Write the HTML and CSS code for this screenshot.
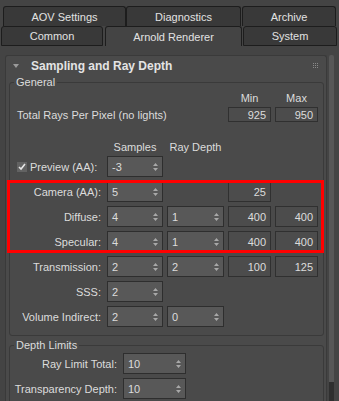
FILE: index.html
```html
<!DOCTYPE html>
<html lang="en">
<head>
    <meta charset="UTF-8">
    <meta name="viewport" content="width=device-width, initial-scale=1.0">
    <title>Render Setup - Arnold Renderer</title>
    <link rel="stylesheet" href="styles.css">
</head>
<body>
<div class="tabs">
    <div class="tab-row top">
        <div class="tab tab-aov">AOV Settings</div>
        <div class="tab tab-diag">Diagnostics</div>
        <div class="tab tab-archive">Archive</div>
    </div>
    <div class="tab-row bottom">
        <div class="tab tab-common">Common</div>
        <div class="tab tab-arnold active">Arnold Renderer</div>
        <div class="tab tab-system">System</div>
    </div>
</div>

<div class="main">
    <div class="rollout">
        <div class="rollout-head">
            <span class="caret"></span>
            <span class="rollout-title">Sampling and Ray Depth</span>
            <svg class="grip" width="5" height="5" viewBox="0 0 5 5">
                <g fill="#8a8a8a">
                    <rect x="0" y="0" width="1" height="1"/><rect x="2" y="0" width="1" height="1"/><rect x="4" y="0" width="1" height="1"/>
                    <rect x="0" y="2" width="1" height="1"/><rect x="2" y="2" width="1" height="1"/><rect x="4" y="2" width="1" height="1"/>
                    <rect x="0" y="4" width="1" height="1"/><rect x="2" y="4" width="1" height="1"/><rect x="4" y="4" width="1" height="1"/>
                </g>
            </svg>
        </div>

        <fieldset class="group general">
            <legend>General</legend>

            <div class="row head first">
                <span class="c4">Min</span>
                <span class="c5">Max</span>
            </div>
            <div class="row short">
                <span class="label-left wide">Total Rays Per Pixel (no lights)</span>
                <span class="field c4">925</span>
                <span class="field c5">950</span>
            </div>

            <div class="row head second">
                <span class="c2">Samples</span>
                <span class="c3">Ray Depth</span>
            </div>
            <div class="row">
                <label class="label-left check-label">
                    <span class="checkbox">
                        <svg width="10" height="10" viewBox="0 0 10 10"><path d="M2 5l2 2 4-5" fill="none" stroke="#e6e6e6" stroke-width="1.6"/></svg>
                    </span>
                    Preview (AA):
                </label>
                <div class="spinner c2"><span>-3</span><svg width="5" height="8" viewBox="0 0 5 8"><path d="M2.5 0L5 3H0zM0 5h5L2.5 8z" fill="#a8a8a8"/></svg></div>
            </div>

            <div class="highlight">
                <div class="row">
                    <span class="label">Camera (AA):</span>
                    <div class="spinner c2"><span>5</span><svg width="5" height="8" viewBox="0 0 5 8"><path d="M2.5 0L5 3H0zM0 5h5L2.5 8z" fill="#a8a8a8"/></svg></div>
                    <span class="field c4">25</span>
                </div>
                <div class="row">
                    <span class="label">Diffuse:</span>
                    <div class="spinner c2"><span>4</span><svg width="5" height="8" viewBox="0 0 5 8"><path d="M2.5 0L5 3H0zM0 5h5L2.5 8z" fill="#a8a8a8"/></svg></div>
                    <div class="spinner c3"><span>1</span><svg width="5" height="8" viewBox="0 0 5 8"><path d="M2.5 0L5 3H0zM0 5h5L2.5 8z" fill="#a8a8a8"/></svg></div>
                    <span class="field c4">400</span>
                    <span class="field c5">400</span>
                </div>
                <div class="row">
                    <span class="label">Specular:</span>
                    <div class="spinner c2"><span>4</span><svg width="5" height="8" viewBox="0 0 5 8"><path d="M2.5 0L5 3H0zM0 5h5L2.5 8z" fill="#a8a8a8"/></svg></div>
                    <div class="spinner c3"><span>1</span><svg width="5" height="8" viewBox="0 0 5 8"><path d="M2.5 0L5 3H0zM0 5h5L2.5 8z" fill="#a8a8a8"/></svg></div>
                    <span class="field c4">400</span>
                    <span class="field c5">400</span>
                </div>
            </div>

            <div class="row">
                <span class="label">Transmission:</span>
                <div class="spinner c2"><span>2</span><svg width="5" height="8" viewBox="0 0 5 8"><path d="M2.5 0L5 3H0zM0 5h5L2.5 8z" fill="#a8a8a8"/></svg></div>
                <div class="spinner c3"><span>2</span><svg width="5" height="8" viewBox="0 0 5 8"><path d="M2.5 0L5 3H0zM0 5h5L2.5 8z" fill="#a8a8a8"/></svg></div>
                <span class="field c4">100</span>
                <span class="field c5">125</span>
            </div>
            <div class="row">
                <span class="label">SSS:</span>
                <div class="spinner c2"><span>2</span><svg width="5" height="8" viewBox="0 0 5 8"><path d="M2.5 0L5 3H0zM0 5h5L2.5 8z" fill="#a8a8a8"/></svg></div>
            </div>
            <div class="row">
                <span class="label">Volume Indirect:</span>
                <div class="spinner c2"><span>2</span><svg width="5" height="8" viewBox="0 0 5 8"><path d="M2.5 0L5 3H0zM0 5h5L2.5 8z" fill="#a8a8a8"/></svg></div>
                <div class="spinner c3"><span>0</span><svg width="5" height="8" viewBox="0 0 5 8"><path d="M2.5 0L5 3H0zM0 5h5L2.5 8z" fill="#a8a8a8"/></svg></div>
            </div>
        </fieldset>

        <fieldset class="group depth">
            <legend>Depth Limits</legend>
            <div class="row depth-row first">
                <span class="label">Ray Limit Total:</span>
                <div class="spinner"><span>10</span><svg width="5" height="8" viewBox="0 0 5 8"><path d="M2.5 0L5 3H0zM0 5h5L2.5 8z" fill="#a8a8a8"/></svg></div>
            </div>
            <div class="row depth-row">
                <span class="label">Transparency Depth:</span>
                <div class="spinner"><span>10</span><svg width="5" height="8" viewBox="0 0 5 8"><path d="M2.5 0L5 3H0zM0 5h5L2.5 8z" fill="#a8a8a8"/></svg></div>
            </div>
        </fieldset>
    </div>

    <div class="scrollbar">
        <div class="thumb"></div>
        <div class="track"></div>
    </div>
</div>
</body>
</html>
```

FILE: styles.css
```css
* {
    box-sizing: border-box;
}

body {
    margin: 0;
    height: 401px;
    overflow: hidden;
    background-color: #444444;
    color: #dcdcdc;
    font-family: 'Liberation Sans', Arial, sans-serif;
    font-size: 11px;
}

/* tabs */
.tabs {
    padding-top: 6px;
}

.tab-row {
    display: flex;
    height: 20px;
}

.tab-row.top {
    padding-left: 3px;
}

.tab-row.bottom {
    padding-left: 1px;
}

.tab {
    display: flex;
    align-items: center;
    justify-content: center;
    height: 20px;
    background-color: #393939;
    border: 1px solid #1d1d1d;
    border-bottom: none;
    border-radius: 3px 3px 0 0;
    color: #e2e2e2;
}

.tab-row.bottom .tab {
    border-bottom: 1px solid #1d1d1d;
}

.tab-row.bottom .tab.active {
    background-color: #444444;
    border-bottom: none;
}

.tab-aov { width: 123px; }
.tab-diag { width: 115px; }
.tab-archive { width: 94px; margin-left: 1px; }
.tab-common { width: 102px; }
.tab-arnold { width: 137px; margin-left: 2px; }
.tab-system { width: 94px; margin-left: 1px; }

/* rollout */
.main {
    display: flex;
    margin-top: 9px;
}

.rollout {
    width: 322px;
    margin-left: 5px;
    background-color: #4a4a4a;
    border: 1px solid #3a3a3a;
    border-bottom: none;
    border-radius: 3px 3px 0 0;
    height: 346px;
    overflow: hidden;
}

.rollout-head {
    display: flex;
    align-items: center;
    height: 19px;
    padding-left: 7px;
    padding-right: 8px;
}

.caret {
    width: 0;
    height: 0;
    border-left: 3px solid transparent;
    border-right: 3px solid transparent;
    border-top: 4px solid #9a9a9a;
    margin-right: 12px;
}

.rollout-title {
    flex: 1;
    font-size: 12px;
    font-weight: bold;
    color: #e4e4e4;
}

.grip {
    display: block;
}

/* group boxes */
.group {
    margin: 1px 2px 0 3px;
    padding: 0 0 8px 0;
    border: 1px solid #3a3a3a;
    border-radius: 3px;
    min-width: 0;
}

.group legend {
    margin-left: 4px;
    padding: 0 2px;
    line-height: 13px;
    color: #dcdcdc;
}

.group.depth {
    margin-top: 3px;
    padding-bottom: 20px;
}

.row {
    display: grid;
    grid-template-columns: 93px 56px 57px 43px 43px;
    column-gap: 4px;
    align-items: center;
    height: 21px;
    margin-top: 4px;
}

.row.head {
    height: 14px;
    text-align: center;
}

.row.head.first {
    margin-top: 2px;
}

.row.head.second {
    margin-top: 18px;
}

.row.short {
    height: 15px;
    margin-top: 2px;
}

.row.head.second + .row {
    margin-top: 2px;
}

.c2 { grid-column: 2; }
.c3 { grid-column: 3; }
.c4 { grid-column: 4; }
.c5 { grid-column: 5; }

.wide {
    grid-column: 1 / 4;
}

.label {
    grid-column: 1;
    text-align: right;
    padding-right: 2px;
    white-space: nowrap;
}

.label-left {
    padding-left: 7px;
    white-space: nowrap;
}

.check-label {
    grid-column: 1;
    display: flex;
    align-items: center;
    gap: 3px;
    padding-left: 7px;
}

.checkbox {
    display: block;
    width: 10px;
    height: 10px;
    background-color: #626262;
}

.checkbox svg {
    display: block;
}

.field {
    height: 100%;
    display: flex;
    align-items: center;
    justify-content: flex-end;
    padding-right: 4px;
    border: 1px solid #303030;
    background-color: #4c4c4c;
}

.spinner {
    height: 100%;
    display: flex;
    align-items: center;
    justify-content: space-between;
    padding: 0 4px 0 4px;
    background-color: #585858;
    border: 1px solid #2e2e2e;
}

.spinner svg {
    display: block;
}

.highlight {
    position: relative;
}

/* annotation frame drawn over the rows */
.highlight::after {
    content: '';
    position: absolute;
    top: -1px;
    left: -3px;
    right: -1px;
    bottom: -1px;
    border: 3px solid #ff0000;
    pointer-events: none;
}

.depth-row {
    grid-template-columns: 109px 63px;
}

.depth-row.first {
    margin-top: 1px;
}

/* scrollbar */
.scrollbar {
    display: flex;
    flex-direction: column;
    width: 5px;
    margin-left: 2px;
    height: 346px;
}

.thumb {
    height: 327px;
    background-color: #575757;
    border-radius: 2px 2px 0 0;
}

.track {
    flex: 1;
    background-color: #2f2f2f;
}
```
